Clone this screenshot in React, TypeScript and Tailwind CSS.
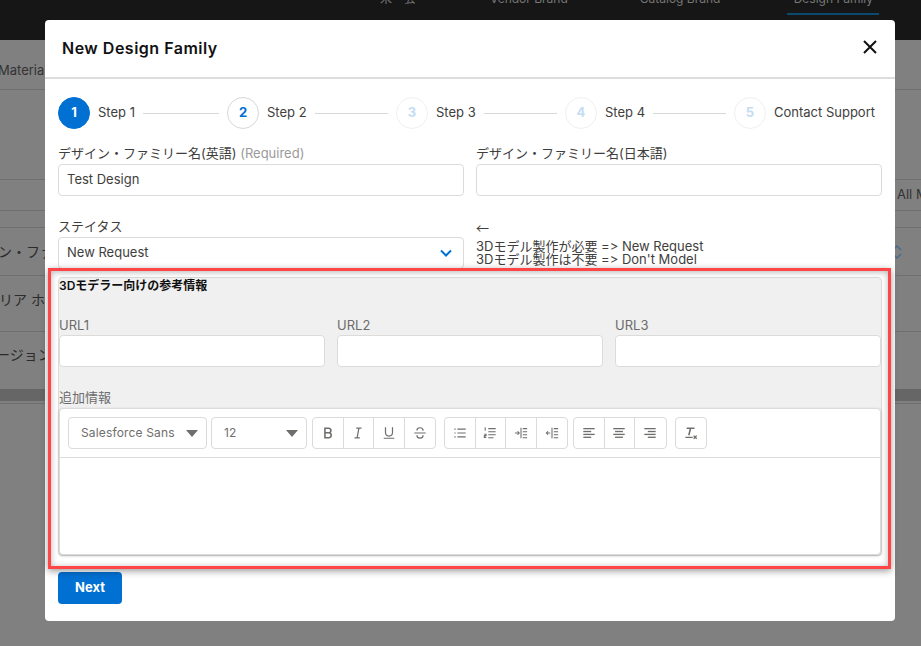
import { ReactNode } from "react";

const jp = "font-['Inter','Noto_Sans_CJK_JP',sans-serif]";

const Ico = ({ children }: { children: ReactNode }) => (
  <svg width="14" height="14" viewBox="0 0 16 16" fill="none" stroke="#706e6b" strokeWidth="1.4">
    {children}
  </svg>
);

const Lines = ({ rows }: { rows: [number, number][] }) => (
  <>
    {rows.map(([a, b], i) => (
      <path key={i} d={`M${a} ${3 + i * 3.3}H${b}`} strokeWidth="1.500" />
    ))}
  </>
);

const tools = {
  bold: <path d="M4.500 2.500h4.200a2.600 2.600 0 0 1 0 5.300H4.500Zm0 5.300h4.800a2.900 2.900 0 0 1 0 5.700H4.500Z" strokeWidth="1.800" />,
  italic: <path d="M6 2.500h6M4 13.500h6M9 2.500l-2 11" />,
  underline: <path d="M4 1.500v6a4 4 0 0 0 8 0v-6M2 14h12" />,
  strike: <path d="M1.500 8h13M11.500 5.500C11.500 3 9.500 2 8 2 6 2 4.500 3 4.500 5M4.500 10.500c0 2.300 1.900 3.300 3.500 3.300 1.800 0 3.500-.8 3.500-3.300" />,
  bullets: <path d="M5 3.500h9.500M5 8h9.500M5 12.500h9.500M1.500 3.500h1.500M1.500 8h1.500M1.500 12.500h1.500" />,
  numbers: <path d="M6 3h8.500M6 6.500h8.500M6 10h8.500M6 13.500h6M2.500 1.500v4M1.500 9.500h2v1.500h-2v2h2.200" strokeWidth="1.200" />,
  indent: <path d="M1 8h4.500M4 6l2 2-2 2M8 2v12M10 3h5M10 6.500h5M10 10h5M10 13.500h5" strokeWidth="1.200" />,
  outdent: <path d="M6 8H1.500M3.500 6l-2 2 2 2M8 2v12M10 3h5M10 6.500h5M10 10h5M10 13.500h5" strokeWidth="1.200" />,
  left: <Lines rows={[[1.500, 14.500], [1.500, 10.500], [1.500, 14.500], [1.500, 10.500]]} />,
  center: <Lines rows={[[1.500, 14.500], [3.500, 12.500], [1.500, 14.500], [3.500, 12.500]]} />,
  right: <Lines rows={[[1.500, 14.500], [5.500, 14.500], [1.500, 14.500], [5.500, 14.500]]} />,
  clear: (
    <>
      <path d="M3 2.500h9M7.500 2.500 5.500 10.500" strokeWidth="1.800" />
      <path d="M1.500 13h8.500" />
      <path d="M11 11l3.500 3.500M14.500 11 11 14.500" strokeWidth="1.500" />
    </>
  ),
};

const ToolGroup = ({ items, className = "" }: { items: (keyof typeof tools)[]; className?: string }) => (
  <div className={`flex h-8 rounded border border-[#dddbda] bg-white divide-x divide-[#dddbda] ${className}`}>
    {items.map((k) => (
      <div key={k} className="flex w-[30.5px] items-center justify-center">
        <Ico>{tools[k]}</Ico>
      </div>
    ))}
  </div>
);

const FontPick = ({ label, className }: { label: string; className: string }) => (
  <div className={`flex h-8 items-center justify-between rounded border border-[#dddbda] bg-white text-[12px] tracking-[0.15px] ${className}`}>
    <span className="text-[#706e6b]">{label}</span>
    <span className="h-0 w-0 border-x-[6px] border-t-[7px] border-x-transparent border-t-[#706e6b]" />
  </div>
);

const Step = ({ n, label, state, last }: { n: number; label: string; state: "active" | "next" | "off"; last?: boolean }) => (
  <div className={`flex items-center ${last ? "" : "w-[169px]"}`}>
    <div
      className={`flex h-8 w-8 shrink-0 items-center justify-center rounded-full border text-[13px] font-bold ${
        state === "active"
          ? "border-[#0070d2] bg-[#0070d2] text-white"
          : state === "next"
            ? "border-[#d8d8d8] text-[#0070d2]"
            : "border-[#f0f0f0] text-[#c5dcf3]"
      }`}
    >
      {n}
    </div>
    <span className="ml-2 whitespace-nowrap text-[13px] text-[#3e3e3c]">{label}</span>
    {!last && <div className="mx-2 h-px flex-1 bg-[#d8d8d8]" />}
  </div>
);

const TextBox = ({ value, className = "" }: { value?: string; className?: string }) => (
  <div className={`flex h-8 items-center rounded border border-[#dddbda] bg-white px-2 text-[13px] text-[#3e3e3c] ${className}`}>
    {value}
  </div>
);

const Bg = () => (
  <div className={`h-full w-full bg-[#808080] text-[14px] text-[#2b2b2b] ${jp}`}>
    <div className="flex h-10 items-start overflow-hidden bg-[#161616] text-[12px] text-[#777]">
      <span className="ml-[380px] -mt-[10px]">米・会</span>
      <span className="ml-[74px] -mt-[10px]">Vendor Brand</span>
      <span className="ml-[72px] -mt-[10px]">Catalog Brand</span>
      <div className="ml-[67px] h-[15px] w-[92px] border-b-2 border-[#0b4a6e] text-center">
        <span className="relative -top-[10px] block">Design Family</span>
      </div>
    </div>
    <div className="h-[50px] border-b border-[#6f6f6f] pt-[22px] text-[13px] leading-4 text-[#333]">
      <span className="-ml-[2px] block">Materials</span>
    </div>
    <div className="h-[90px] border-b border-[#6f6f6f]" />
    <div className="flex h-[31px] items-center overflow-hidden whitespace-nowrap border-b border-[#6f6f6f] pl-[897px] text-[13px] text-[#333]">
      <span>All Materials</span>
    </div>
    <div className="h-[17px] border-b border-[#6f6f6f]" />
    <div className="flex h-[48px] items-center justify-between border-b border-[#6f6f6f]">
      <span className="-ml-4">イン・ファミリー</span>
      <span className="mr-[18px]">
        <svg width="12" height="18" viewBox="0 0 12 18" fill="none" stroke="#4b6a8c" strokeWidth="1.500">
          <path d="M2 7l4-4 4 4M2 11l4 4 4-4" />
        </svg>
      </span>
    </div>
    <div className="h-[56px] border-b border-[#6f6f6f] pt-[13px]">
      <span className="-ml-px block">リア ホーム</span>
    </div>
    <div className="h-[57px] pt-[12px]">
      <span className="-ml-1 block">ージョン</span>
    </div>
    <div className="h-[12px] bg-[#666]" />
    <div className="h-[3px] border-b border-[#6f6f6f]" />
  </div>
);

export default function App() {
  return (
    <div className="relative h-[646px] w-[921px] overflow-hidden">
      <Bg />

      {/* modal */}
      <div className={`absolute left-[45px] top-5 h-[601px] w-[850px] rounded bg-white ${jp}`}>
        <div className="flex h-[59px] items-center justify-between border-b-2 border-[#dddddd] pl-[17px] pr-4">
          <h2 className="mb-0.5 text-[16px] font-semibold tracking-[0.5px] text-[#111]">New Design Family</h2>
          <svg width="18" height="18" viewBox="0 0 18 18" fill="none" stroke="#111" strokeWidth="2" className="mb-1">
            <path d="M3 3l12 12M15 3 3 15" />
          </svg>
        </div>

        <div className="px-[13px]">
          <div className="mt-[18px] flex">
            <Step n={1} label="Step 1" state="active" />
            <Step n={2} label="Step 2" state="next" />
            <Step n={3} label="Step 3" state="off" />
            <Step n={4} label="Step 4" state="off" />
            <Step n={5} label="Contact Support" state="off" last />
          </div>

          <div className="mt-[14px] grid grid-cols-2 gap-x-3 text-[13px] text-[#3e3e3c]">
            <div>
              <label className="block h-[21px] leading-[21px]">
                デザイン・ファミリー名(英語) <span className="text-[#9a9a9a]">(Required)</span>
              </label>
              <TextBox value="Test Design" />
            </div>
            <div>
              <label className="block h-[21px] leading-[21px]">デザイン・ファミリー名(日本語)</label>
              <TextBox />
            </div>
            <div className="mt-5">
              <label className="block h-[21px] leading-[21px]">ステイタス</label>
              <div className="flex h-8 items-center justify-between rounded border border-[#dddbda] bg-white px-2 text-[13px]">
                New Request
                <svg width="14" height="14" viewBox="0 0 14 14" fill="none" stroke="#0070d2" strokeWidth="2" className="mr-0.5">
                  <path d="M2 4.500l5 5 5-5" />
                </svg>
              </div>
            </div>
            <div className="mt-5 text-[13px] leading-[13px] [font-feature-settings:'calt'_0]">
              <div className="h-[14px] pt-[5px] font-['Noto_Sans_CJK_JP',sans-serif]">←</div>
              <div className="mt-[10px]">3Dモデル製作が必要 =&gt; New Request</div>
              <div>3Dモデル製作は不要 =&gt; Don't Model</div>
            </div>
          </div>

          {/* reference panel */}
          <div className="mt-2 h-[279px] rounded-sm border border-[#dddbda] bg-[#f0f0f0] pt-px">
            <div className="h-[13px] text-[12px] font-semibold leading-[13px] text-[#111]">3Dモデラー向けの参考情報</div>
            <div className="mt-[24px] grid grid-cols-3 gap-x-3 text-[13px] text-[#6b6b6b]">
              {["URL1", "URL2", "URL3"].map((u) => (
                <div key={u}>
                  <label className="block h-[19px] leading-[19px]">{u}</label>
                  <TextBox />
                </div>
              ))}
            </div>
            <div className="mt-[20px] h-[21px] text-[13px] leading-[21px] text-[#6b6b6b]">追加情報</div>
            <div className="h-[147px] rounded-sm border border-[#dddbda] bg-white shadow-[0_1px_3px_rgba(0,0,0,0.2)]">
              <div className="flex h-[49px] items-center border-b border-[#dddbda] pl-2">
                <FontPick label="Salesforce Sans" className="w-[139px] pl-3 pr-2" />
                <FontPick label="12" className="ml-1 w-24 pl-3 pr-2" />
                <ToolGroup items={["bold", "italic", "underline", "strike"]} className="ml-[5px]" />
                <ToolGroup items={["bullets", "numbers", "indent", "outdent"]} className="ml-2" />
                <ToolGroup items={["left", "center", "right"]} className="ml-[5px]" />
                <ToolGroup items={["clear"]} className="ml-2" />
              </div>
            </div>
          </div>

          <button className="mt-[16px] h-8 w-16 rounded bg-[#0070d2] text-[13px] font-bold text-white">Next</button>
        </div>
      </div>

      {/* annotation */}
      <div className="absolute left-[48px] top-[268px] h-[301px] w-[843px] border-[3px] border-[#ff4545] shadow-[0_2px_7px_rgba(0,0,0,0.4),inset_0_1px_6px_rgba(0,0,0,0.3)]" />
    </div>
  );
}
